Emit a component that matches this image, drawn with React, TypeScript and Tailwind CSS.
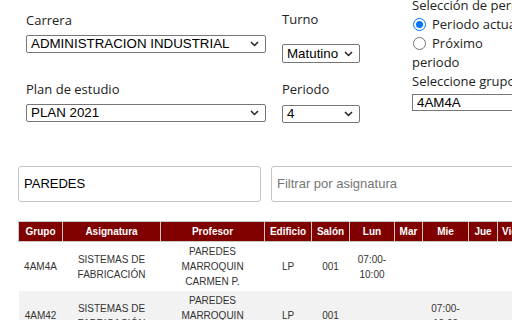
import React from 'react';

type Row = {
  grupo: string;
  asignatura: string[];
  profesor: string[];
  edificio: string;
  salon: string;
  lun: string[];
  mie: string[];
  bg: string;
};

const rows: Row[] = [
  {
    grupo: '4AM4A',
    asignatura: ['SISTEMAS DE', 'FABRICACIÓN'],
    profesor: ['PAREDES', 'MARROQUIN', 'CARMEN P.'],
    edificio: 'LP',
    salon: '001',
    lun: ['07:00-', '10:00'],
    mie: [],
    bg: 'bg-white',
  },
  {
    grupo: '4AM42',
    asignatura: ['SISTEMAS DE', 'FABRICACIÓN'],
    profesor: ['PAREDES', 'MARROQUIN', 'CARMEN P.'],
    edificio: 'LP',
    salon: '001',
    lun: [],
    mie: ['07:00-', '10:00'],
    bg: 'bg-[#f2f2f2]',
  },
];

const headers = [
  { label: 'Grupo', w: 'w-[44px]' },
  { label: 'Asignatura', w: 'w-[98px]' },
  { label: 'Profesor', w: 'w-[104px]' },
  { label: 'Edificio', w: 'w-[47px]' },
  { label: 'Salón', w: 'w-[38px]' },
  { label: 'Lun', w: 'w-[45px]' },
  { label: 'Mar', w: 'w-[28px]' },
  { label: 'Mie', w: 'w-[46px]' },
  { label: 'Jue', w: 'w-[29px]' },
  { label: 'Vie', w: 'w-[24px]' },
  { label: 'Sab', w: 'w-[28px]' },
];

const Chevron = () => (
  <svg width="9" height="6" viewBox="0 0 9 6" className="shrink-0">
    <path d="M1 1l3.5 3.5L8 1" fill="none" stroke="#222" strokeWidth="1.5" />
  </svg>
);

const Select = ({ value, className }: { value: string; className: string }) => (
  <div
    className={`flex h-[18px] items-center justify-between rounded-[2px] border border-[#767676] bg-white pl-[4px] pr-[6px] font-['Liberation_Sans',Arial,sans-serif] text-[13.33px] leading-none whitespace-nowrap text-black ${className}`}
  >
    <span>{value}</span>
    <Chevron />
  </div>
);

const Lines = ({ lines }: { lines: string[] }) => (
  <>
    {lines.map((l, i) => (
      <div key={i}>{l}</div>
    ))}
  </>
);

const cell = 'px-[2px] py-[2px] text-center leading-[15px]';

export default function App() {
  return (
    <div className="h-[320px] w-[512px] overflow-hidden bg-white font-['Liberation_Sans',Arial,sans-serif]">
      <div className="flex font-['Open_Sans',sans-serif] text-[13px] text-[#222]">
        <div className="ml-[26px] w-[240px] shrink-0 pt-[10px]">
          <div className="leading-[20px]">Carrera</div>
          <Select value="ADMINISTRACION INDUSTRIAL" className="mt-[5px]" />
          <div className="mt-[26px] leading-[20px]">Plan de estudio</div>
          <Select value="PLAN 2021" className="mt-[5px]" />
        </div>

        <div className="ml-[16px] w-[78px] shrink-0 pt-[9px]">
          <div className="leading-[20px]">Turno</div>
          <Select value="Matutino" className="mt-[15px] h-[19px]" />
          <div className="mt-[16px] leading-[20px]">Periodo</div>
          <Select value="4" className="mt-[6px]" />
        </div>

        <div className="-mt-[4px] ml-[52px] w-[140px] shrink-0 leading-[19px]">
          <div className="whitespace-nowrap">Selección de periodo</div>
          <div className="flex items-center whitespace-nowrap">
            <span className="ml-[1px] mr-[6px] flex h-[13px] w-[13px] items-center justify-center rounded-full border border-[#0075ff]">
              <span className="h-[7px] w-[7px] rounded-full bg-[#0075ff]" />
            </span>
            Periodo actual
          </div>
          <div className="flex items-center whitespace-nowrap">
            <span className="ml-[1px] mr-[6px] h-[13px] w-[13px] rounded-full border border-[#767676]" />
            Próximo
          </div>
          <div>periodo</div>
          <div className="whitespace-nowrap">Seleccione grupo</div>
          <div className="mt-[3px] flex h-[17px] w-[120px] items-center border border-[#767676] pl-[4px] font-['Liberation_Sans',Arial,sans-serif] text-[13.33px] text-black">
            4AM4A
          </div>
        </div>
      </div>

      <div className="ml-[18px] mt-[43px] flex gap-[10px]">
        <div className="flex h-[36px] w-[243px] shrink-0 items-center rounded-[3px] border border-[#c4c4c4] pl-[5px] text-[13px] text-black">
          PAREDES
        </div>
        <div className="flex h-[36px] w-[260px] shrink-0 items-center rounded-[3px] border border-[#c4c4c4] pl-[5px] text-[13px] text-[#757575]">
          Filtrar por asignatura
        </div>
      </div>

      <table className="ml-[18px] mt-[19px] w-[531px] table-fixed border-collapse text-[10px] text-[#333]">
        <thead>
          <tr className="bg-[#800000]">
            {headers.map((h) => (
              <th
                key={h.label}
                className={`${h.w} h-[20px] overflow-hidden whitespace-nowrap border border-[#c8c8c8] p-0 text-center font-bold leading-[18px] text-white`}
              >
                {h.label}
              </th>
            ))}
          </tr>
        </thead>
        <tbody>
          {rows.map((r) => (
            <tr key={r.grupo} className={r.bg}>
              <td className={cell}>{r.grupo}</td>
              <td className={cell}>
                <Lines lines={r.asignatura} />
              </td>
              <td className={cell}>
                <Lines lines={r.profesor} />
              </td>
              <td className={cell}>{r.edificio}</td>
              <td className={cell}>{r.salon}</td>
              <td className={cell}>
                <Lines lines={r.lun} />
              </td>
              <td className={cell} />
              <td className={cell}>
                <Lines lines={r.mie} />
              </td>
              <td className={cell} />
              <td className={cell} />
              <td className={cell} />
            </tr>
          ))}
        </tbody>
      </table>
    </div>
  );
}
